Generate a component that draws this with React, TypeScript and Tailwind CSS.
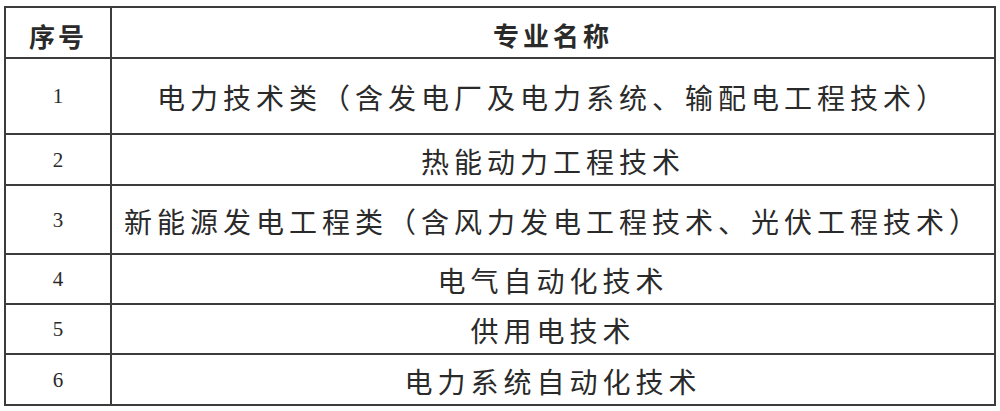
const rows: { no: string; name: string; h: string }[] = [
  { no: '1', name: '电力技术类（含发电厂及电力系统、输配电工程技术）', h: 'h-[76px]' },
  { no: '2', name: '热能动力工程技术', h: 'h-[51px]' },
  { no: '3', name: '新能源发电工程类（含风力发电工程技术、光伏工程技术）', h: 'h-[69px]' },
  { no: '4', name: '电气自动化技术', h: 'h-[50px]' },
  { no: '5', name: '供用电技术', h: 'h-[50px]' },
  { no: '6', name: '电力系统自动化技术', h: 'h-[51px]' },
]

export default function App() {
  return (
    <div className="h-[411px] w-[1000px] overflow-hidden bg-white pl-[4px] pt-[6px]">
      <table className="w-[992px] table-fixed border-collapse text-[#2a2a2a] [font-family:'Noto_Sans_CJK_SC',sans-serif]">
        <colgroup>
          <col className="w-[106px]" />
          <col />
        </colgroup>
        <thead>
          <tr className="h-[51px]">
            <th className="border-2 border-[#3c3c3c] pt-[6px] text-center text-[26px] font-semibold tracking-[3px]">
              序号
            </th>
            <th className="border-2 border-[#3c3c3c] pt-[4px] text-center text-[26px] font-semibold tracking-[4px]">
              专业名称
            </th>
          </tr>
        </thead>
        <tbody>
          {rows.map((r) => (
            <tr key={r.no} className={r.h}>
              <td className="border-2 border-[#3c3c3c] pt-[2px] text-center text-[21px] [font-family:'Liberation_Serif',serif]">
                {r.no}
              </td>
              <td className="border-2 border-[#3c3c3c] pt-[2px] text-center text-[28px] tracking-[5px]">
                {r.name}
              </td>
            </tr>
          ))}
        </tbody>
      </table>
    </div>
  )
}
